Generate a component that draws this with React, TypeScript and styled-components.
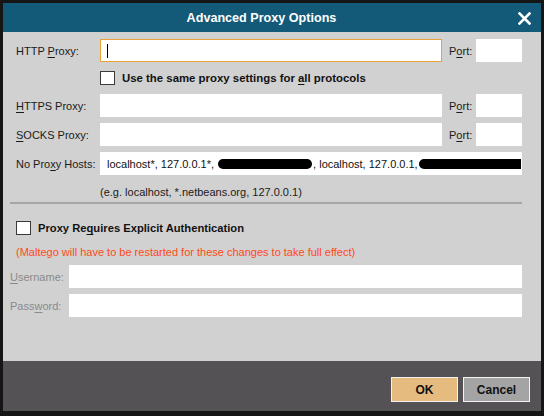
import React from "react";
import styled, { createGlobalStyle } from "styled-components";

const Global = createGlobalStyle`
  html, body { margin: 0; padding: 0; background: #151515; }
  body { font-family: "Liberation Sans", Arial, sans-serif; }
  * { box-sizing: border-box; }
`;

const Window = styled.div`
  width: 544px;
  height: 416px;
  border: 3px solid #151515;
  border-bottom-width: 5px;
  display: flex;
  flex-direction: column;
  background: #d1d1d1;
`;

const TitleBar = styled.div`
  height: 29px;
  background: #125a78;
  display: flex;
  align-items: center;
  color: #ffffff;
`;

const TitleText = styled.div`
  flex: 1;
  text-align: center;
  margin-right: -2px;
  font-weight: bold;
  font-size: 12.6px;
  padding-top: 1px;
`;

const Close = styled.svg`
  width: 13px;
  height: 13px;
  margin-right: 10px;
  margin-top: 1px;
`;

const Content = styled.div`
  flex: 1;
  padding: 7px 19px 0 7px;
  display: flex;
  flex-direction: column;
`;

const TopGrid = styled.div`
  margin-left: 6px;
  display: grid;
  grid-template-columns: 84px 1fr 34px 46px;
  grid-template-rows: 23px 20px 23px 23px 23px 20px;
  row-gap: 6px;
  align-items: center;
`;

const Label = styled.label<{ $disabled?: boolean }>`
  font-size: 11px;
  color: ${(p) => (p.$disabled ? "#8a8a8a" : "#1a1a1a")};
  white-space: nowrap;
  u { text-decoration-thickness: 1px; text-underline-offset: 2px; }
`;

const PortLabel = styled(Label)`
  padding-left: 7px;
`;

const Field = styled.div<{ $focused?: boolean; $span?: boolean }>`
  height: 23px;
  background: #ffffff;
  border: 1px solid ${(p) => (p.$focused ? "#e8a23a" : "#ffffff")};
  display: flex;
  align-items: center;
  padding-left: 6px;
  overflow: hidden;
  white-space: nowrap;
  font-size: 11px;
  color: #111;
  grid-column: ${(p) => (p.$span ? "2 / 5" : "auto")};
`;

const Caret = styled.span`
  width: 1px;
  height: 14px;
  background: #000;
`;

const Redacted = styled.span<{ $w: number }>`
  display: inline-block;
  flex: none;
  width: ${(p) => p.$w}px;
  height: 10px;
  background: #000;
  border-radius: 5px;
  margin: 0 1px;
`;

const CheckRow = styled.div<{ $span?: boolean }>`
  grid-column: ${(p) => (p.$span ? "2 / 5" : "auto")};
  display: flex;
  align-items: center;
  gap: 7px;
`;

const Box = styled.span`
  width: 15px;
  height: 14px;
  background: #ffffff;
  border: 1px solid #3a3a3a;
  flex: none;
`;

const BoldLabel = styled.span<{ $size?: number }>`
  font-size: ${(p) => p.$size ?? 11.4}px;
  font-weight: bold;
  color: #111;
  white-space: nowrap;
  u { text-underline-offset: 2px; }
`;

const Hint = styled.div`
  grid-column: 2 / 5;
  font-size: 11px;
  color: #1a1a1a;
  padding-top: 1px;
`;

const Separator = styled.div`
  height: 2px;
  background: #a6a6a6;
  margin-top: 1px;
`;

const AuthRow = styled(CheckRow)`
  margin: 14px 0 0 6px;
  height: 20px;
`;

const Warning = styled.div`
  margin: 6px 0 0 6px;
  font-size: 11px;
  line-height: 16px;
  color: #ff4a1a;
  white-space: nowrap;
`;

const AuthGrid = styled.div`
  margin-top: 5px;
  display: grid;
  grid-template-columns: 59px 1fr;
  grid-auto-rows: 23px;
  row-gap: 6px;
  align-items: center;
`;

const Footer = styled.div`
  height: 50px;
  background: #545254;
  display: flex;
  justify-content: flex-end;
  align-items: flex-start;
  gap: 5px;
  padding: 16px 11px 0 0;
`;

const Button = styled.button<{ $primary?: boolean }>`
  width: 67px;
  height: 25px;
  border: 1px solid #f2f2f2;
  background: ${(p) => (p.$primary ? "#e6bb80" : "#a4a4a4")};
  color: #111;
  font-family: "Liberation Sans", Arial, sans-serif;
  font-weight: bold;
  font-size: 12px;
  padding: 0;
`;

export default function App() {
  return (
    <>
      <Global />
      <Window>
        <TitleBar>
          <TitleText>Advanced Proxy Options</TitleText>
          <Close viewBox="0 0 13 13">
            <path d="M1.5 1.5 L11.5 11.5 M11.5 1.5 L1.5 11.5" stroke="#fff" strokeWidth="2.6" strokeLinecap="square" />
          </Close>
        </TitleBar>
        <Content>
          <TopGrid>
            <Label>HTTP <u>P</u>roxy:</Label>
            <Field $focused>
              <Caret />
            </Field>
            <PortLabel>P<u>o</u>rt:</PortLabel>
            <Field />

            <span />
            <CheckRow $span>
              <Box />
              <BoldLabel>Use the same proxy settings for <u>a</u>ll protocols</BoldLabel>
            </CheckRow>

            <Label><u>H</u>TTPS Proxy:</Label>
            <Field />
            <PortLabel>P<u>o</u>rt:</PortLabel>
            <Field />

            <Label><u>S</u>OCKS Proxy:</Label>
            <Field />
            <PortLabel>P<u>o</u>rt:</PortLabel>
            <Field />

            <Label>No Pro<u>x</u>y Hosts:</Label>
            <Field $span>
              localhost*, 127.0.0.1*,&nbsp;<Redacted $w={94} />, localhost, 127.0.0.1,<Redacted $w={110} />
            </Field>

            <span />
            <Hint>(e.g. localhost, *.netbeans.org, 127.0.0.1)</Hint>
          </TopGrid>
          <Separator />
          <AuthRow>
            <Box />
            <BoldLabel $size={11.2}>Proxy Re<u>q</u>uires Explicit Authentication</BoldLabel>
          </AuthRow>
          <Warning>(Maltego will have to be restarted for these changes to take full effect)</Warning>
          <AuthGrid>
            <Label $disabled><u>U</u>sername:</Label>
            <Field />
            <Label $disabled>Pass<u>w</u>ord:</Label>
            <Field />
          </AuthGrid>
        </Content>
        <Footer>
          <Button $primary>OK</Button>
          <Button>Cancel</Button>
        </Footer>
      </Window>
    </>
  );
}
